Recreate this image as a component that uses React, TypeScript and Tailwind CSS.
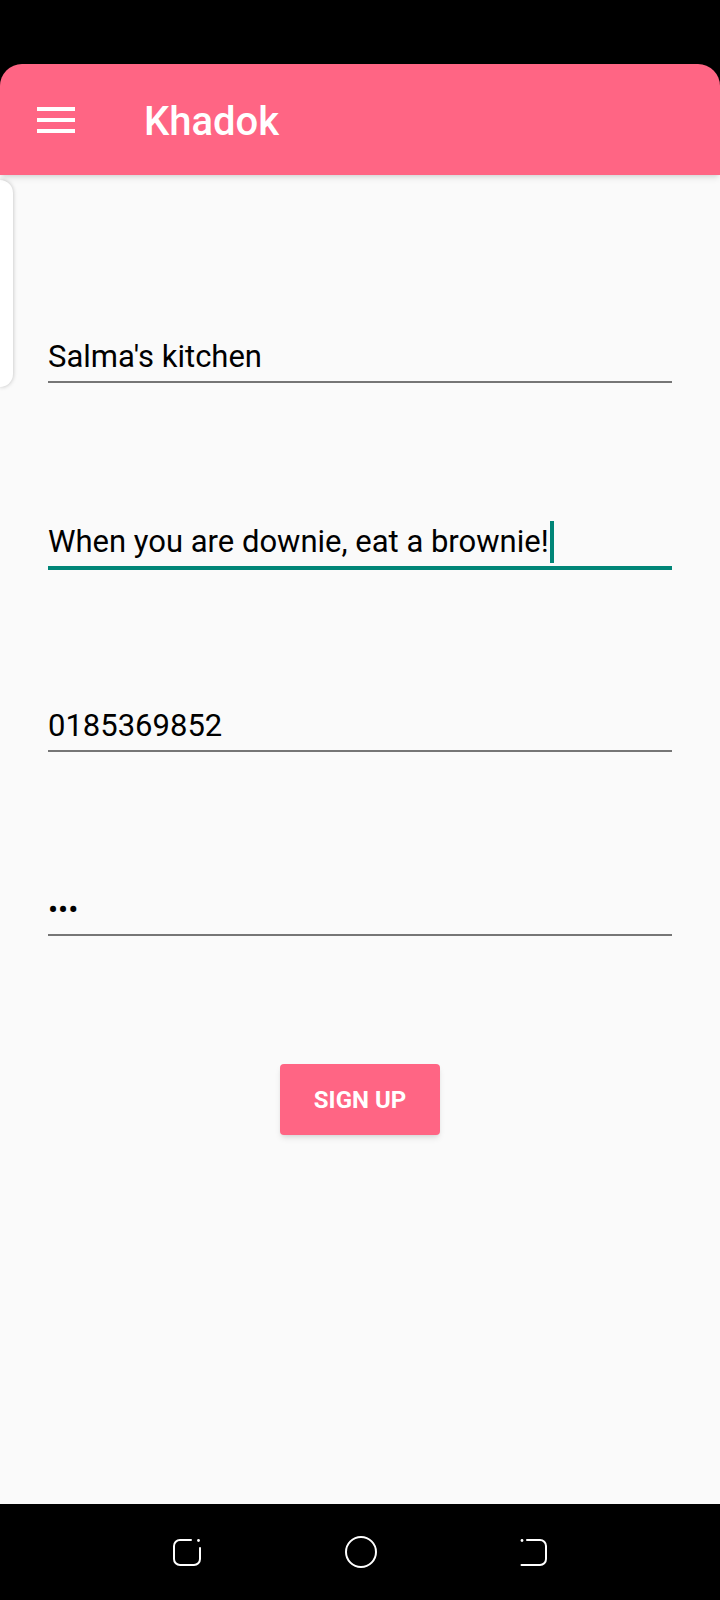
export default function App() {
  const font = { fontFamily: "Roboto, 'Noto Sans', sans-serif" };

  return (
    <div className="relative flex h-[1600px] w-[720px] flex-col overflow-hidden bg-black" style={font}>
      {/* Status bar */}
      <div className="h-[64px] shrink-0 bg-black"></div>

      {/* App bar */}
      <header className="relative z-10 flex h-[111px] shrink-0 items-center rounded-t-[22px] bg-[#ff6584] pl-[37px] shadow-md">
        <div className="flex h-[26px] w-[38px] flex-col justify-between">
          <span className="block h-[4px] w-full bg-white"></span>
          <span className="block h-[4px] w-full bg-white"></span>
          <span className="block h-[4px] w-full bg-white"></span>
        </div>
        <h1 className="ml-[69px] mt-[5px] text-[40px] font-medium leading-none text-white">Khadok</h1>
      </header>

      {/* Content */}
      <main className="relative flex flex-1 flex-col bg-[#fafafa] px-[48px] pt-[163px]">
        {/* Drawer edge */}
        <div className="absolute left-0 top-[5px] h-[207px] w-[13px] rounded-r-[20px] bg-white shadow-[0_0_4px_rgba(0,0,0,0.25)]"></div>

        <div className="border-b-2 border-[#767676] pb-[5px]">
          <div className="text-[31px] leading-[38px] text-black">Salma's kitchen</div>
        </div>

        <div className="mt-[140px] border-b-4 border-[#008577] pb-[5px]">
          <div className="flex h-[38px] items-center text-[31px] leading-[38px] text-black">
            <span>When you are downie, eat a brownie!</span>
            <span className="ml-[1px] block h-[42px] w-[4px] bg-[#008577]"></span>
          </div>
        </div>

        <div className="mt-[137px] border-b-2 border-[#767676] pb-[5px]">
          <div className="text-[31px] leading-[38px] text-black">0185369852</div>
        </div>

        <div className="mt-[139px] border-b-2 border-[#767676] pb-[5px]">
          <div className="text-[30px] leading-[38px] text-black">•••</div>
        </div>

        <div className="mt-[128px] flex justify-center">
          <button className="flex h-[71px] w-[160px] items-center justify-center rounded-[4px] bg-[#ff6584] text-[24px] font-bold uppercase text-white shadow-md">
            Sign up
          </button>
        </div>
      </main>

      {/* Navigation bar */}
      <nav className="flex h-[96px] shrink-0 items-center justify-center gap-[143px] bg-black">
        <svg width="30" height="30" viewBox="0 0 30 30" fill="none" stroke="white" strokeWidth="2" strokeLinecap="round">
          <path d="M19 3 H8 A6 6 0 0 0 2 9 V22 A6 6 0 0 0 8 28 H22 A6 6 0 0 0 28 22 V11" />
          <circle cx="26.5" cy="3.5" r="1.4" fill="white" stroke="none" />
        </svg>
        <svg width="32" height="32" viewBox="0 0 32 32" fill="none" stroke="white" strokeWidth="2">
          <circle cx="16" cy="16" r="15" />
        </svg>
        <svg width="28" height="30" viewBox="0 0 28 30" fill="none" stroke="white" strokeWidth="2" strokeLinecap="round">
          <path d="M7 3 H20 A6 6 0 0 1 26 9 V22 A6 6 0 0 1 20 28 H1.5" />
          <circle cx="2" cy="3.5" r="1.4" fill="white" stroke="none" />
        </svg>
      </nav>
    </div>
  );
}
